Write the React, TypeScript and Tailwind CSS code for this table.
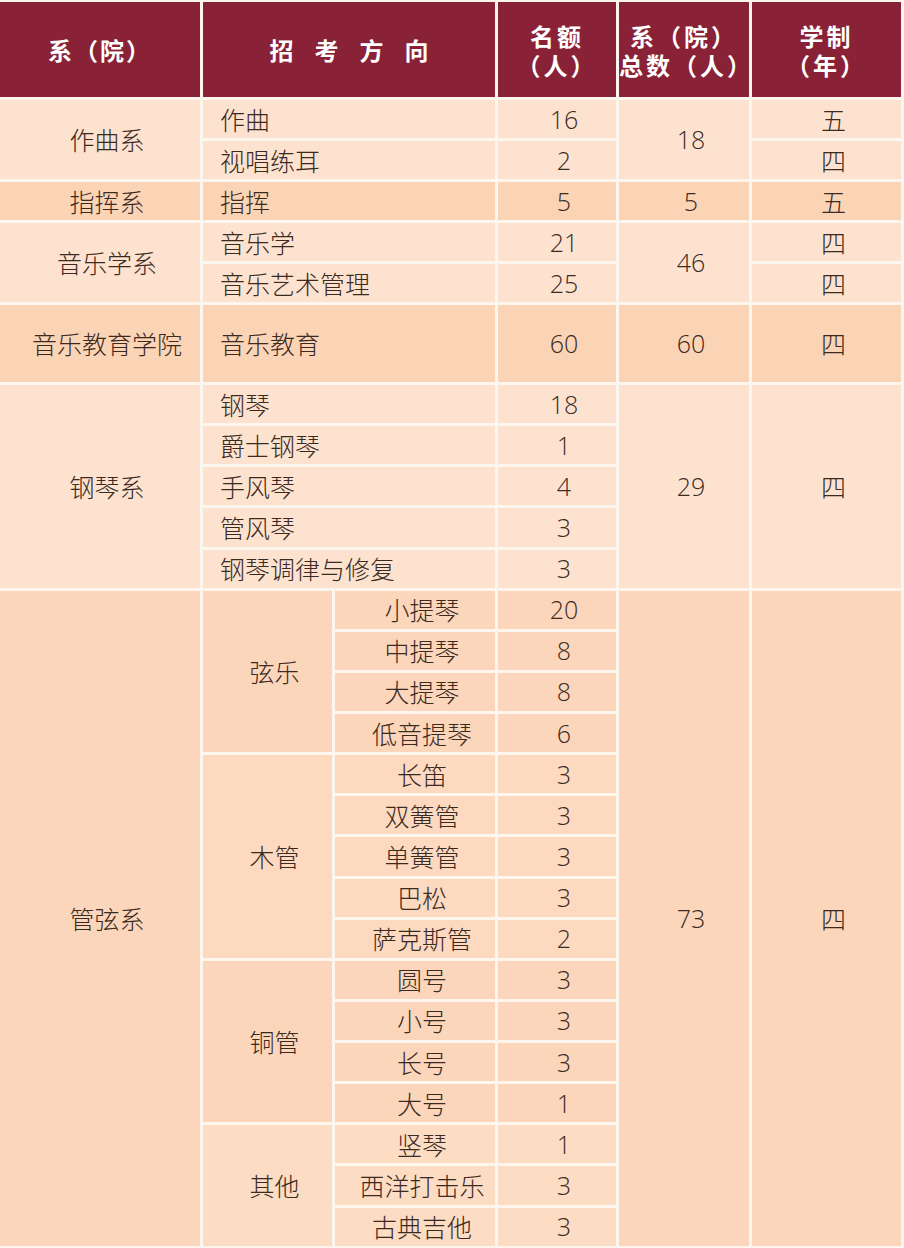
import React from "react";

const cjk = "font-['Noto_Sans_CJK_SC','Noto_Sans',sans-serif] font-light";
const hcjk = "font-['Noto_Sans_CJK_SC','Noto_Sans',sans-serif] font-bold";
const num = "font-['Open_Sans','Liberation_Sans',sans-serif] font-light";

type CellProps = {
  children?: React.ReactNode;
  className?: string;
};

function Cell({ children, className = "" }: CellProps) {
  return (
    <div className={`flex items-center text-[25px] leading-none text-[#3b2a1f] ${className}`}>
      {children}
    </div>
  );
}

function H({ children, className = "" }: CellProps) {
  return (
    <div
      className={`flex flex-col items-center justify-center bg-[#8a2237] text-[24px] leading-[29px] text-white ${hcjk} ${className}`}
    >
      {children}
    </div>
  );
}

const L = "bg-[#fde3cf]"; // light
const M = "bg-[#fbd3b5]"; // medium (指挥, 音乐教育)
const W = "bg-[#fcd6ba]"; // 管弦
const WL = "bg-[#fcd9bf]"; // 管弦 subcells
const WO = "bg-[#fddcc4]"; // 其他 lighter

function Name({ children, bg, className = "" }: { children: React.ReactNode; bg: string; className?: string }) {
  return (
    <Cell className={`${bg} justify-center pl-[14px] ${cjk} ${className}`}>{children}</Cell>
  );
}

function Dir({ children, bg }: { children: React.ReactNode; bg: string }) {
  return <Cell className={`${bg} col-span-2 pl-[17px] ${cjk}`}>{children}</Cell>;
}

function Sub({ children, bg }: { children: React.ReactNode; bg: string }) {
  return <Cell className={`${bg} justify-center pl-[14px] ${cjk}`}>{children}</Cell>;
}

function N({ children, bg, className = "" }: { children: React.ReactNode; bg: string; className?: string }) {
  return (
    <Cell className={`${bg} justify-center pl-[14px] ${num} ${className}`}>{children}</Cell>
  );
}

export default function App() {
  return (
    <div className="w-[904px] h-[1248px] bg-[#fdf6ef] pt-[2px]">
      <div className="grid w-[901px] grid-cols-[200px_129px_160px_118px_130px_149px] grid-rows-[95px_repeat(5,38px)_77px_repeat(21,38.14px)] gap-[3px]">
        {/* header */}
        <H className="tracking-[2px]">系（院）</H>
        <H className="col-span-2 pl-[21px] tracking-[21px]">招考方向</H>
        <H className="tracking-[3px]">
          <span className="block h-[29px]">名额</span>
          <span className="block h-[29px]">（人）</span>
        </H>
        <H className="tracking-[3px]">
          <span className="block h-[29px]">系（院）</span>
          <span className="block h-[29px]">总数（人）</span>
        </H>
        <H className="tracking-[3px]">
          <span className="block h-[29px]">学制</span>
          <span className="block h-[29px]">（年）</span>
        </H>

        {/* 作曲系 */}
        <Name bg={L} className="row-span-2">作曲系</Name>
        <Dir bg={L}>作曲</Dir>
        <N bg={L}>16</N>
        <N bg={L} className="row-span-2">18</N>
        <Name bg={L}>五</Name>
        <Dir bg={L}>视唱练耳</Dir>
        <N bg={L}>2</N>
        <Name bg={L}>四</Name>

        {/* 指挥系 */}
        <Name bg={M}>指挥系</Name>
        <Dir bg={M}>指挥</Dir>
        <N bg={M}>5</N>
        <N bg={M}>5</N>
        <Name bg={M}>五</Name>

        {/* 音乐学系 */}
        <Name bg={L} className="row-span-2">音乐学系</Name>
        <Dir bg={L}>音乐学</Dir>
        <N bg={L}>21</N>
        <N bg={L} className="row-span-2">46</N>
        <Name bg={L}>四</Name>
        <Dir bg={L}>音乐艺术管理</Dir>
        <N bg={L}>25</N>
        <Name bg={L}>四</Name>

        {/* 音乐教育学院 */}
        <Name bg={M}>音乐教育学院</Name>
        <Dir bg={M}>音乐教育</Dir>
        <N bg={M}>60</N>
        <N bg={M}>60</N>
        <Name bg={M}>四</Name>

        {/* 钢琴系 */}
        <Name bg={L} className="row-span-5">钢琴系</Name>
        <Dir bg={L}>钢琴</Dir>
        <N bg={L}>18</N>
        <N bg={L} className="row-span-5">29</N>
        <Name bg={L} className="row-span-5">四</Name>
        <Dir bg={L}>爵士钢琴</Dir>
        <N bg={L}>1</N>
        <Dir bg={L}>手风琴</Dir>
        <N bg={L}>4</N>
        <Dir bg={L}>管风琴</Dir>
        <N bg={L}>3</N>
        <Dir bg={L}>钢琴调律与修复</Dir>
        <N bg={L}>3</N>

        {/* 管弦系 */}
        <Name bg={W} className="row-span-16">管弦系</Name>
        <Name bg={W} className="row-span-4">弦乐</Name>
        <Sub bg={W}>小提琴</Sub>
        <N bg={W}>20</N>
        <N bg={W} className="row-span-16">73</N>
        <Name bg={W} className="row-span-16">四</Name>
        <Sub bg={W}>中提琴</Sub>
        <N bg={W}>8</N>
        <Sub bg={W}>大提琴</Sub>
        <N bg={W}>8</N>
        <Sub bg={W}>低音提琴</Sub>
        <N bg={W}>6</N>

        <Name bg={WL} className="row-span-5">木管</Name>
        <Sub bg={WL}>长笛</Sub>
        <N bg={WL}>3</N>
        <Sub bg={WL}>双簧管</Sub>
        <N bg={WL}>3</N>
        <Sub bg={WL}>单簧管</Sub>
        <N bg={WL}>3</N>
        <Sub bg={WL}>巴松</Sub>
        <N bg={WL}>3</N>
        <Sub bg={WL}>萨克斯管</Sub>
        <N bg={WL}>2</N>

        <Name bg={W} className="row-span-4">铜管</Name>
        <Sub bg={W}>圆号</Sub>
        <N bg={W}>3</N>
        <Sub bg={W}>小号</Sub>
        <N bg={W}>3</N>
        <Sub bg={W}>长号</Sub>
        <N bg={W}>3</N>
        <Sub bg={W}>大号</Sub>
        <N bg={W}>1</N>

        <Name bg={WO} className="row-span-3">其他</Name>
        <Sub bg={WO}>竖琴</Sub>
        <N bg={WO}>1</N>
        <Sub bg={WO}>西洋打击乐</Sub>
        <N bg={WO}>3</N>
        <Sub bg={WO}>古典吉他</Sub>
        <N bg={WO}>3</N>
      </div>
    </div>
  );
}
